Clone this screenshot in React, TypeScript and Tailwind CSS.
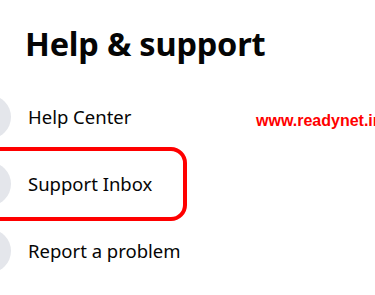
const rows = ["Help Center", "Support Inbox", "Report a problem"]

export default function App() {
  return (
    <div
      className="relative h-[295px] w-[375px] overflow-hidden bg-white text-[#050505]"
      style={{ fontFamily: '"Noto Sans", "Open Sans", sans-serif' }}
    >
      <h1 className="pl-[25px] pt-[22px] text-[32.5px] font-bold leading-[44px] tracking-[-0.2px]">
        Help &amp; support
      </h1>
      <div className="mt-[17px] flex flex-col">
        {rows.map((label) => (
          <div key={label} className="flex h-[67px] items-center">
            <div className="-ml-[33px] h-11 w-11 shrink-0 rounded-full bg-[#e4e6eb]" />
            <span className="ml-[17px] text-[18.5px] leading-6">{label}</span>
          </div>
        ))}
      </div>

      {/* annotation frame */}
      <div className="absolute left-[-20px] top-[147px] h-[74px] w-[207px] rounded-2xl border-4 border-[#ff0000]" />

      {/* watermark */}
      <span
        className="absolute left-[256px] top-[111px] text-[16px] font-bold leading-5 text-[#ff0000]"
        style={{ fontFamily: '"Liberation Sans", Arial, sans-serif' }}
      >
        www.readynet.ir
      </span>
    </div>
  )
}
